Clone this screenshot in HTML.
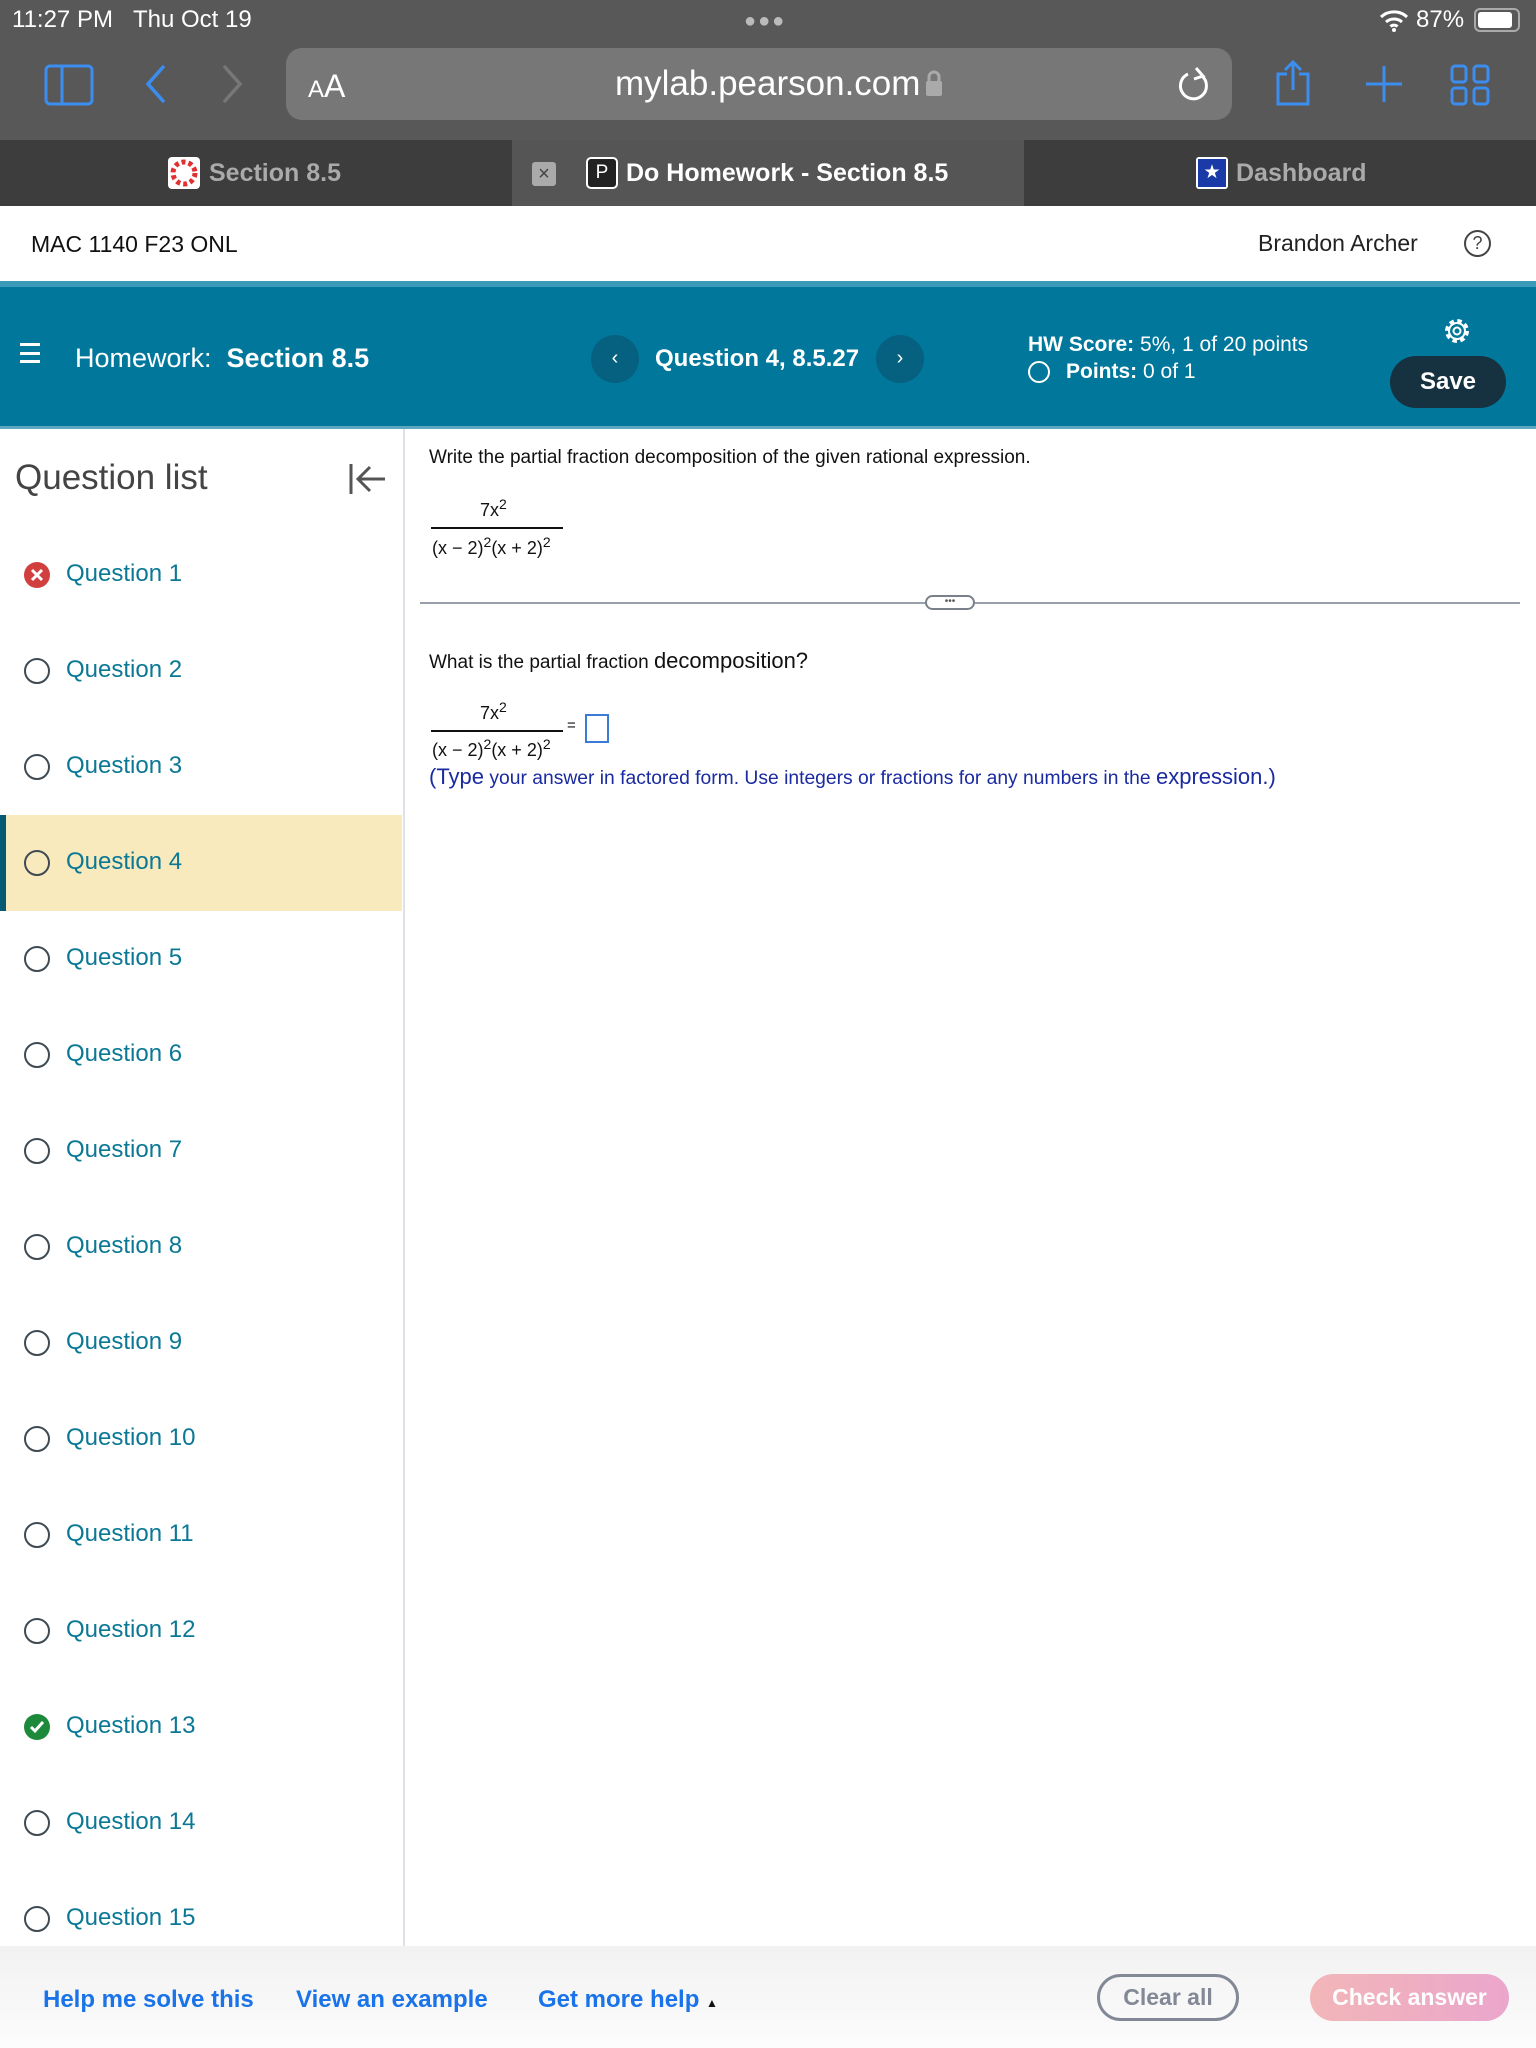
<!DOCTYPE html>
<html><head><meta charset="utf-8"><style>
*{margin:0;padding:0;box-sizing:border-box}
body{width:1536px;height:2048px;position:relative;overflow:hidden;font-family:"Liberation Sans",Arial,sans-serif;background:#fff}
.a{position:absolute;white-space:nowrap}
.q{position:absolute;left:0;width:402px;height:96px}
.q .c{position:absolute;left:24px;top:35px;width:26px;height:26px;border:2.6px solid #3f4a52;border-radius:50%}
.q .t{position:absolute;left:66px;top:33px;font-size:24px;color:#0b7895}
</style></head><body>
<!-- safari chrome -->
<div class="a" style="left:0;top:0;width:1536px;height:140px;background:#585858"></div>
<div class="a" style="left:12px;top:6px;font-size:24px;color:#fff">11:27 PM&nbsp;&nbsp;&nbsp;Thu Oct 19</div>
<div class="a" style="left:744px;top:10px;font-size:20px;color:#bbb;letter-spacing:2px">●●●</div>
<svg class="a" style="left:1378px;top:8px" width="32" height="24" viewBox="0 0 32 24"><path d="M3 9a19 19 0 0 1 26 0M8 14a12 12 0 0 1 16 0M12.5 18.5a5 5 0 0 1 7 0" stroke="#fff" stroke-width="3" fill="none"/><circle cx="16" cy="22" r="2" fill="#fff"/></svg>
<div class="a" style="left:1416px;top:6px;font-size:24px;color:#fff">87%</div>
<div class="a" style="left:1474px;top:8px;width:46px;height:24px;border:2px solid #aaa;border-radius:6px;padding:2px"><div style="width:34px;height:16px;background:#fff;border-radius:3px"></div></div>
<svg class="a" style="left:44px;top:64px" width="52" height="42"><rect x="2" y="2" width="46" height="38" rx="4" fill="none" stroke="#3b8ef0" stroke-width="3"/><line x1="18" y1="2" x2="18" y2="40" stroke="#3b8ef0" stroke-width="3"/></svg>
<svg class="a" style="left:140px;top:62px" width="30" height="44"><path d="M24 4L8 22l16 18" stroke="#3b8ef0" stroke-width="3.5" fill="none"/></svg>
<svg class="a" style="left:218px;top:62px" width="30" height="44"><path d="M6 4l16 18L6 40" stroke="#777" stroke-width="3.5" fill="none"/></svg>
<div class="a" style="left:286px;top:48px;width:946px;height:72px;background:#777;border-radius:16px"></div>
<div class="a" style="left:308px;top:68px;font-size:32px;color:#fff"><span style="font-size:24px">A</span>A</div>
<div class="a" style="left:615px;top:64px;font-size:35px;color:#fff">mylab.pearson.com</div>
<svg class="a" style="left:924px;top:68px" width="20" height="30"><path d="M5 14V9a5 5 0 0 1 10 0v5" stroke="#aaa" stroke-width="3" fill="none"/><rect x="2" y="13" width="16" height="15" rx="2" fill="#aaa"/></svg>
<svg class="a" style="left:1176px;top:66px" width="36" height="40"><path d="M26 10A13 13 0 1 1 12 8" stroke="#fff" stroke-width="3" fill="none"/><path d="M20 2l7 8-9 3" stroke="#fff" stroke-width="3" fill="none"/></svg>
<svg class="a" style="left:1274px;top:58px" width="40" height="50"><path d="M13 16H4v30h30V16h-9M19 32V4M11 12l8-8 8 8" stroke="#3b8ef0" stroke-width="3" fill="none"/></svg>
<svg class="a" style="left:1364px;top:64px" width="40" height="40"><path d="M20 2v36M2 20h36" stroke="#3b8ef0" stroke-width="3"/></svg>
<svg class="a" style="left:1450px;top:64px" width="40" height="42"><g fill="none" stroke="#3b8ef0" stroke-width="3"><rect x="2" y="2" width="14" height="16" rx="3"/><rect x="24" y="2" width="14" height="16" rx="3"/><rect x="2" y="24" width="14" height="16" rx="3"/><rect x="24" y="24" width="14" height="16" rx="3"/></g></svg>
<!-- tabs -->
<div class="a" style="left:0;top:140px;width:1536px;height:66px;background:#3d3d3d"></div>
<div class="a" style="left:512px;top:140px;width:512px;height:66px;background:#555"></div>
<div class="a" style="left:168px;top:157px;width:32px;height:32px;background:#fff;border-radius:4px"><svg width="32" height="32"><circle cx="16" cy="16" r="11" fill="none" stroke="#e03030" stroke-width="5" stroke-dasharray="4 3"/></svg></div>
<div class="a" style="left:209px;top:159px;font-size:25px;color:#aaa;font-weight:bold">Section 8.5</div>
<div class="a" style="left:532px;top:162px;width:24px;height:24px;background:#aaa;border-radius:3px;color:#444;font-size:20px;text-align:center;line-height:24px">×</div>
<div class="a" style="left:586px;top:157px;width:32px;height:32px;border:2px solid #fff;border-radius:5px;background:#222;color:#fff;font-size:19px;text-align:center;line-height:28px">P</div>
<div class="a" style="left:626px;top:159px;font-size:25px;color:#fff;font-weight:bold">Do Homework - Section 8.5</div>
<div class="a" style="left:1196px;top:157px;width:32px;height:32px;background:#fff;border-radius:3px;padding:2px"><div style="width:28px;height:28px;background:#1a3aa8;color:#fff;font-size:19px;text-align:center;line-height:28px">★</div></div>
<div class="a" style="left:1236px;top:159px;font-size:25px;color:#aaa;font-weight:bold">Dashboard</div>
<!-- header -->
<div class="a" style="left:31px;top:231px;font-size:23px;color:#111">MAC 1140 F23 ONL</div>
<div class="a" style="left:1258px;top:230px;font-size:23px;color:#222">Brandon Archer</div>
<div class="a" style="left:1464px;top:230px;width:27px;height:27px;border:2px solid #444;border-radius:50%;font-size:18px;text-align:center;line-height:23px;color:#444">?</div>
<!-- teal bar -->
<div class="a" style="left:0;top:281px;width:1536px;height:148px;background:#00779b;border-top:6px solid #3a9ab8;border-bottom:3px solid #5aa8c0"></div>
<div class="a" style="left:20px;top:343px;width:20px;height:20px;border-top:3px solid #fff;border-bottom:3px solid #fff"><div style="margin-top:5.5px;height:3px;background:#fff"></div></div>
<div class="a" style="left:75px;top:343px;font-size:27px;color:#fff">Homework:&nbsp; <b>Section 8.5</b></div>
<div class="a" style="left:591px;top:335px;width:48px;height:48px;border-radius:50%;background:#06607f;color:#fff;font-size:20px;text-align:center;line-height:46px">‹</div>
<div class="a" style="left:655px;top:345px;font-size:24px;color:#fff;font-weight:bold">Question 4, 8.5.27</div>
<div class="a" style="left:876px;top:335px;width:48px;height:48px;border-radius:50%;background:#06607f;color:#fff;font-size:20px;text-align:center;line-height:46px">›</div>
<div class="a" style="left:1028px;top:333px;font-size:21px;color:#fff"><b>HW Score:</b> 5%, 1 of 20 points</div>
<div class="a" style="left:1028px;top:361px;width:22px;height:22px;border:2.5px solid #fff;border-radius:50%"></div>
<div class="a" style="left:1066px;top:360px;font-size:21px;color:#fff"><b>Points:</b> 0 of 1</div>
<svg class="a" style="left:1443px;top:317px" width="28" height="28" viewBox="0 0 28 28"><circle cx="14" cy="14" r="9.5" fill="none" stroke="#fff" stroke-width="5" stroke-dasharray="4.2 3.26"/><circle cx="14" cy="14" r="8" fill="none" stroke="#fff" stroke-width="2"/><circle cx="14" cy="14" r="3.5" fill="none" stroke="#fff" stroke-width="2"/></svg>
<div class="a" style="left:1390px;top:356px;width:116px;height:52px;background:#16313f;border-radius:26px;color:#fff;font-size:24px;font-weight:bold;text-align:center;line-height:52px">Save</div>
<!-- sidebar -->
<div class="a" style="left:403px;top:429px;width:2px;height:1517px;background:#dde1e8"></div>
<div class="a" style="left:15px;top:458px;font-size:35px;color:#444">Question list</div>
<svg class="a" style="left:348px;top:462px" width="40" height="34"><path d="M3 2v30M37 17H10M22 5L10 17l12 12" stroke="#555" stroke-width="3" fill="none"/></svg>
<div class="q" style="top:527px"><div class="c" style="border:none;background:#d23f3f"><svg width="26" height="26"><path d="M8 8l10 10M18 8L8 18" stroke="#fff" stroke-width="3"/></svg></div><div class="t">Question 1</div></div>
<div class="q" style="top:623px"><div class="c"></div><div class="t">Question 2</div></div>
<div class="q" style="top:719px"><div class="c"></div><div class="t">Question 3</div></div>
<div class="q" style="top:815px;background:#f8eabd;border-left:6px solid #025a74"><div class="c" style="left:18px"></div><div class="t" style="left:60px">Question 4</div></div>
<div class="q" style="top:911px"><div class="c"></div><div class="t">Question 5</div></div>
<div class="q" style="top:1007px"><div class="c"></div><div class="t">Question 6</div></div>
<div class="q" style="top:1103px"><div class="c"></div><div class="t">Question 7</div></div>
<div class="q" style="top:1199px"><div class="c"></div><div class="t">Question 8</div></div>
<div class="q" style="top:1295px"><div class="c"></div><div class="t">Question 9</div></div>
<div class="q" style="top:1391px"><div class="c"></div><div class="t">Question 10</div></div>
<div class="q" style="top:1487px"><div class="c"></div><div class="t">Question 11</div></div>
<div class="q" style="top:1583px"><div class="c"></div><div class="t">Question 12</div></div>
<div class="q" style="top:1679px"><div class="c" style="border:none;background:#1c8a3a"><svg width="26" height="26"><path d="M7 13l4 4 8-9" stroke="#fff" stroke-width="3" fill="none"/></svg></div><div class="t">Question 13</div></div>
<div class="q" style="top:1775px"><div class="c"></div><div class="t">Question 14</div></div>
<div class="q" style="top:1871px"><div class="c"></div><div class="t">Question 15</div></div>
<!-- content -->
<div class="a" style="left:429px;top:447px;font-size:19px;color:#111">Write the partial fraction decomposition of the given rational expression.</div>
<div class="a" style="left:480px;top:496px;font-size:18px;color:#111">7x<sup style="font-size:14px">2</sup></div>
<div class="a" style="left:431px;top:527px;width:132px;height:1.5px;background:#111"></div>
<div class="a" style="left:432px;top:534px;font-size:18px;color:#111">(x − 2)<sup style="font-size:14px">2</sup>(x + 2)<sup style="font-size:14px">2</sup></div>
<div class="a" style="left:420px;top:602px;width:1100px;height:2px;background:#9aa0aa"></div>
<div class="a" style="left:925px;top:595px;width:50px;height:15px;border:2px solid #7a808a;border-radius:8px;background:#fff;font-size:10px;text-align:center;line-height:9px;color:#555">•••</div>
<div class="a" style="left:429px;top:648px;font-size:19px;color:#111">What is the partial fraction <span style="font-size:22px">decomposition?</span></div>
<div class="a" style="left:480px;top:699px;font-size:18px;color:#111">7x<sup style="font-size:14px">2</sup></div>
<div class="a" style="left:431px;top:730px;width:132px;height:1.5px;background:#111"></div>
<div class="a" style="left:567px;top:717px;font-size:15px;color:#111">=</div>
<div class="a" style="left:585px;top:714px;width:24px;height:29px;border:2px solid #3a7bd5"></div>
<div class="a" style="left:432px;top:736px;font-size:18px;color:#111">(x − 2)<sup style="font-size:14px">2</sup>(x + 2)<sup style="font-size:14px">2</sup></div>
<div class="a" style="left:429px;top:764px;font-size:19.3px;color:#1a2aa0"><span style="font-size:22px">(Type</span> your answer in factored form. Use integers or fractions for any numbers in the <span style="font-size:22px">expression.)</span></div>
<!-- bottom bar -->
<div class="a" style="left:0;top:1946px;width:1536px;height:102px;background:linear-gradient(#f2f2f2,#fcfcfc)"></div>
<div class="a" style="left:43px;top:1986px;font-size:24px;color:#1a73e8;font-weight:bold">Help me solve this</div>
<div class="a" style="left:296px;top:1986px;font-size:24px;color:#1a73e8;font-weight:bold">View an example</div>
<div class="a" style="left:538px;top:1986px;font-size:24px;color:#1a73e8;font-weight:bold">Get more help <span style="font-size:12px;color:#111">▲</span></div>
<div class="a" style="left:1097px;top:1974px;width:142px;height:47px;border:3px solid #838896;border-radius:24px;color:#838896;font-size:23px;font-weight:bold;text-align:center;line-height:41px">Clear all</div>
<div class="a" style="left:1310px;top:1974px;width:199px;height:47px;border-radius:24px;background:linear-gradient(90deg,#f2b6b8,#eba6cc);color:#fff;font-size:23px;font-weight:bold;text-align:center;line-height:47px">Check answer</div>
</body></html>
